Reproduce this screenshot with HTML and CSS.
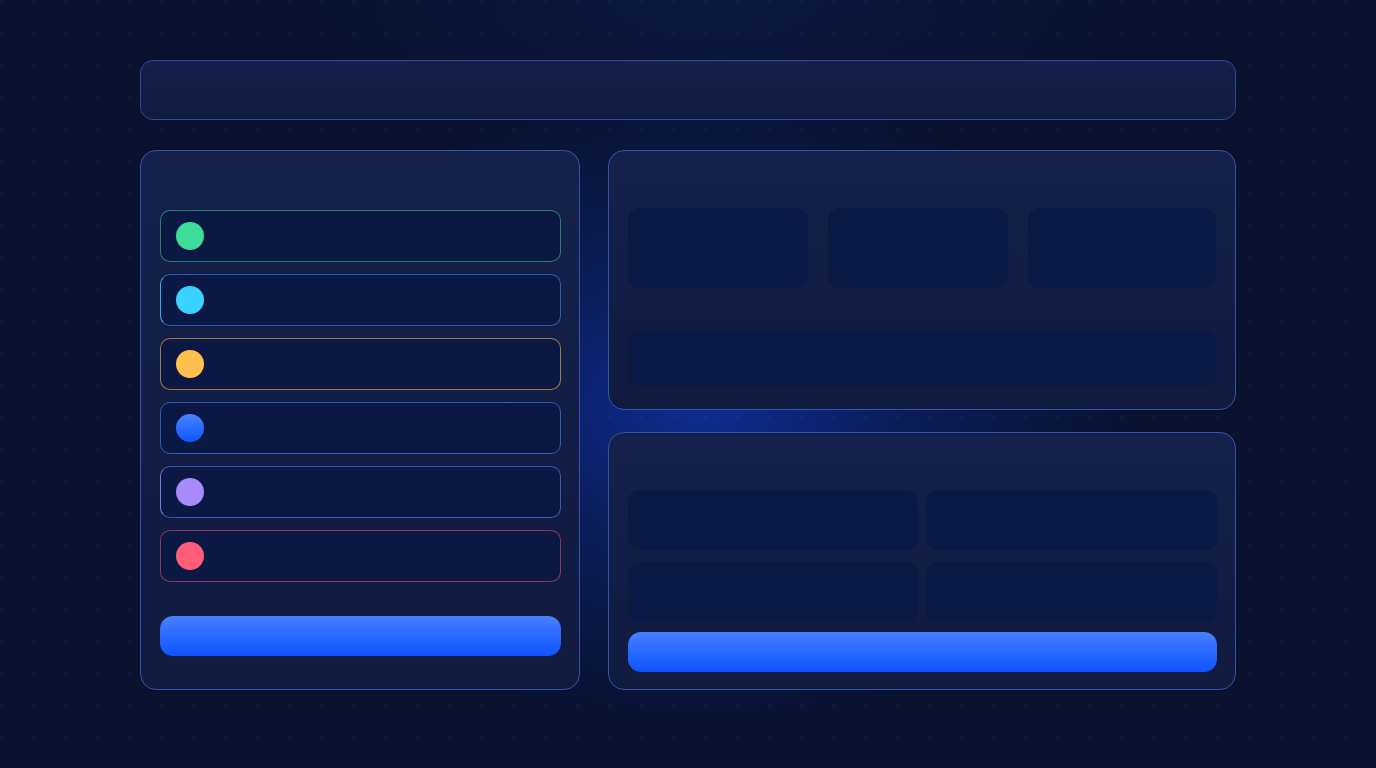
FILE: index.html
```html
<!DOCTYPE html>
<html lang="en">
<head>
<meta charset="utf-8">
<title>Dashboard</title>
<link rel="stylesheet" href="styles.css">
</head>
<body>
<div class="page">
  <header class="topbar"></header>
  <main class="main">
    <section class="card left-card">
      <ul class="items">
        <li class="item item-green"><span class="dot dot-green"></span></li>
        <li class="item item-cyan"><span class="dot dot-cyan"></span></li>
        <li class="item item-amber"><span class="dot dot-amber"></span></li>
        <li class="item item-blue"><span class="dot dot-blue"></span></li>
        <li class="item item-purple"><span class="dot dot-purple"></span></li>
        <li class="item item-red"><span class="dot dot-red"></span></li>
      </ul>
      <div class="btn"></div>
    </section>
    <div class="right-col">
      <section class="card stats-card">
        <div class="stats">
          <div class="tile tile-tall"></div>
          <div class="tile tile-tall"></div>
          <div class="tile tile-tall"></div>
        </div>
        <div class="tile tile-wide"></div>
      </section>
      <section class="card form-card">
        <div class="fields">
          <div class="tile tile-field"></div>
          <div class="tile tile-field"></div>
          <div class="tile tile-field"></div>
          <div class="tile tile-field"></div>
        </div>
        <div class="btn btn-form"></div>
      </section>
    </div>
  </main>
</div>
</body>
</html>
```

FILE: styles.css
```css
* { box-sizing: border-box; }

html, body {
  margin: 0;
  height: 100%;
}

body {
  width: 1376px;
  height: 768px;
  overflow: hidden;
  font-family: "Inter", "Liberation Sans", sans-serif;
  background-color: #0a1230;
  background-image:
    radial-gradient(circle at 16px 16px, rgba(70, 100, 190, 0.16) 0.9px, transparent 1.5px),
    radial-gradient(ellipse 32% 42% at 51% 53%, rgba(12, 46, 150, 0.95) 0%, rgba(12, 40, 130, 0.5) 45%, rgba(10, 18, 48, 0) 100%),
    radial-gradient(ellipse 30% 20% at 52% 0%, rgba(20, 40, 110, 0.3) 0%, rgba(10, 18, 48, 0) 100%);
  background-size: 32px 32px, 100% 100%, 100% 100%;
  background-position: -14.5px -14.5px, 0 0, 0 0;
}

.page {
  padding: 60px 140px;
  display: flex;
  flex-direction: column;
  gap: 30px;
}

.topbar {
  height: 60px;
  border: 1.5px solid #2e4996;
  border-radius: 13px;
  background: linear-gradient(180deg, #15204b 0%, #121b42 100%);
}

.main {
  display: grid;
  grid-template-columns: 440px 628px;
  gap: 28px;
}

.card {
  border: 1.5px solid #3354aa;
  border-radius: 16px;
  background: linear-gradient(180deg, #15214c 0%, #111a3f 100%);
}

.left-card {
  height: 540px;
  padding: 58.5px 18.5px 0;
  display: flex;
  flex-direction: column;
}

.items {
  list-style: none;
  margin: 0;
  padding: 0;
  display: flex;
  flex-direction: column;
  gap: 12px;
}

.item {
  height: 52px;
  border-radius: 10px;
  background: #0b1843;
  border: 1px solid;
  display: flex;
  align-items: center;
  padding-left: 15px;
}

.item-green  { border-color: rgba(52, 200, 140, 0.6); }
.item-cyan   { border-color: #2f5cbc; border-left-color: #34b0ec; }
.item-amber  { border-color: rgba(220, 160, 70, 0.7); }
.item-blue   { border-color: #2f5cc2; }
.item-purple { border-color: #3858b8; border-left-color: #7676dc; }
.item-red    { border-color: rgba(230, 80, 120, 0.58); }

.dot {
  width: 28px;
  height: 28px;
  border-radius: 50%;
}

.dot-green  { background: #3ddc98; }
.dot-cyan   { background: #38d4ff; }
.dot-amber  { background: #ffc04d; }
.dot-blue   { background: linear-gradient(180deg, #4a82ff 0%, #0f55ff 100%); }
.dot-purple { background: #a78bfa; }
.dot-red    { background: #ff5c7a; }

.btn {
  height: 40px;
  border-radius: 13px;
  background: linear-gradient(180deg, #4a80ff 0%, #2c6bff 45%, #0f55ff 100%);
  margin-top: 34px;
}

.right-col {
  display: flex;
  flex-direction: column;
  gap: 22px;
}

.stats-card {
  height: 260px;
  padding: 56.5px 18.5px 0;
  display: flex;
  flex-direction: column;
  gap: 42px;
}

.stats {
  display: grid;
  grid-template-columns: 180px 180px 188px;
  gap: 20px;
}

.tile {
  background: #0b1946;
  border-radius: 12px;
}

.tile-tall { height: 80px; }
.tile-wide { height: 56px; }

.form-card {
  height: 258px;
  padding: 56.5px 18.5px 0;
  display: flex;
  flex-direction: column;
}

.fields {
  display: grid;
  grid-template-columns: 1fr 1fr;
  column-gap: 8px;
  row-gap: 12px;
}

.tile-field { height: 60px; }

.btn-form {
  margin-top: 10px;
}
```
